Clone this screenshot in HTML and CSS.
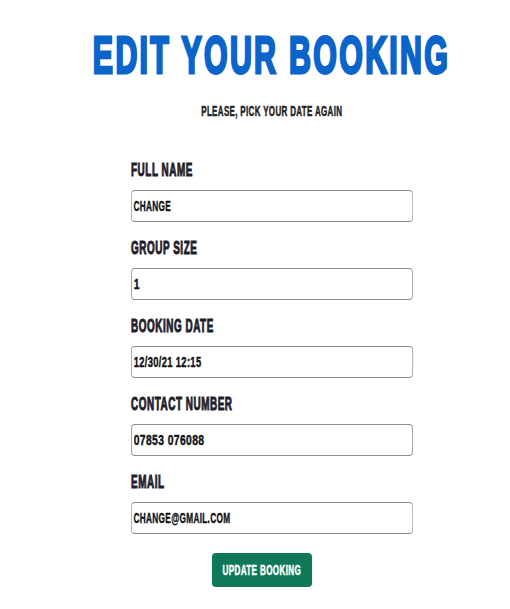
FILE: index.html
```html
<!DOCTYPE html>
<html lang="en">
<head>
<meta charset="utf-8">
<title>Edit your booking</title>
<link rel="stylesheet" href="styles.css">
</head>
<body>
<main class="page">
  <header class="head">
    <h1 class="title"><span class="sq sq-title">Edit your booking</span></h1>
    <p class="subtitle"><span class="sq sq-sub">Please, pick your date again</span></p>
  </header>
  <form class="form">
    <div class="field">
      <label class="label" for="name"><span class="sq sq-left sq-label">Full name</span></label>
      <input class="input input-text" id="name" type="text" value="CHANGE">
    </div>
    <div class="field">
      <label class="label" for="size"><span class="sq sq-left sq-label">Group size</span></label>
      <input class="input input-num" id="size" type="text" value="1">
    </div>
    <div class="field">
      <label class="label" for="date"><span class="sq sq-left sq-label">Booking date</span></label>
      <input class="input input-date" id="date" type="text" value="12/30/21 12:15">
    </div>
    <div class="field">
      <label class="label" for="phone"><span class="sq sq-left sq-label">Contact number</span></label>
      <input class="input input-num" id="phone" type="text" value="07853 076088">
    </div>
    <div class="field">
      <label class="label" for="email"><span class="sq sq-left sq-label">Email</span></label>
      <input class="input input-text" id="email" type="text" value="CHANGE@GMAIL.COM">
    </div>
    <button class="button" type="button"><span class="sq sq-btn">Update booking</span></button>
  </form>
</main>
</body>
</html>
```
FILE: styles.css
```css
* { box-sizing: border-box; }
html, body { margin: 0; padding: 0; background: #ffffff; }
body {
  font-family: "Liberation Sans", Arial, sans-serif;
  font-weight: 700;
  color: #1f2029;
  text-transform: uppercase;
}
.page {
  width: 510px;
  padding-top: 29px;
}
.head {
  padding-left: 34px;
}
.title {
  margin: 0;
  display: flex;
  justify-content: center;
  font-size: 52px;
  line-height: 52px;
  font-weight: 700;
  letter-spacing: 4px;
  color: #0b64c9;
  white-space: nowrap;
  -webkit-text-stroke: 3px #0b64c9;
}
.subtitle {
  margin: 23px 0 0;
  display: flex;
  justify-content: center;
  font-size: 14px;
  line-height: 14px;
  letter-spacing: 0.6px;
  color: #222222;
  white-space: nowrap;
  -webkit-text-stroke: 0.5px #222222;
}
.sq {
  display: inline-block;
  flex: none;
  white-space: nowrap;
  transform: scaleX(var(--sx));
  transform-origin: center;
}
.sq-left { transform-origin: left center; }
.sq-title { --sx: 0.583; }
.sq-sub { --sx: 0.57; }
.sq-label { --sx: 0.55; }
.sq-btn { --sx: 0.58; }

.form {
  margin: 42px 0 0 131px;
  width: 282px;
  display: flex;
  flex-direction: column;
  gap: 16px;
}
.field {
  display: flex;
  flex-direction: column;
  align-items: flex-start;
  gap: 10px;
}
.label {
  display: block;
  font-size: 18px;
  line-height: 20px;
  letter-spacing: 1px;
  color: #1f2029;
  -webkit-text-stroke: 1px #1f2029;
}
.input-text { --sx: 0.59; }
.input-num { --sx: 0.74; }
.input-date { --sx: 0.67; }
.input {
  display: block;
  width: calc(282px / var(--sx));
  height: 32px;
  margin: 0 calc(282px - 282px / var(--sx)) 0 0;
  padding: 0 0 0 calc(2px / var(--sx));
  border-style: solid;
  border-color: #8c8c8c;
  border-width: 1px calc(1px / var(--sx));
  border-radius: calc(4px / var(--sx)) / 4px;
  background: #ffffff;
  font-family: "Liberation Sans", Arial, sans-serif;
  font-weight: 700;
  font-size: 14px;
  letter-spacing: 0.5px;
  color: #111111;
  -webkit-text-stroke: 0.4px #111111;
  text-transform: uppercase;
  transform: scaleX(var(--sx));
  transform-origin: left center;
  outline: none;
}
.button {
  align-self: flex-start;
  margin: 3px 0 0 81px;
  width: 100px;
  height: 34px;
  padding: 0;
  border: 0;
  border-radius: 4px;
  background: #0e7859;
  color: #ffffff;
  display: flex;
  justify-content: center;
  align-items: center;
  font-family: "Liberation Sans", Arial, sans-serif;
  font-weight: 700;
  font-size: 14px;
  letter-spacing: 0.6px;
  -webkit-text-stroke: 0.5px #ffffff;
  text-transform: uppercase;
  white-space: nowrap;
}
```
